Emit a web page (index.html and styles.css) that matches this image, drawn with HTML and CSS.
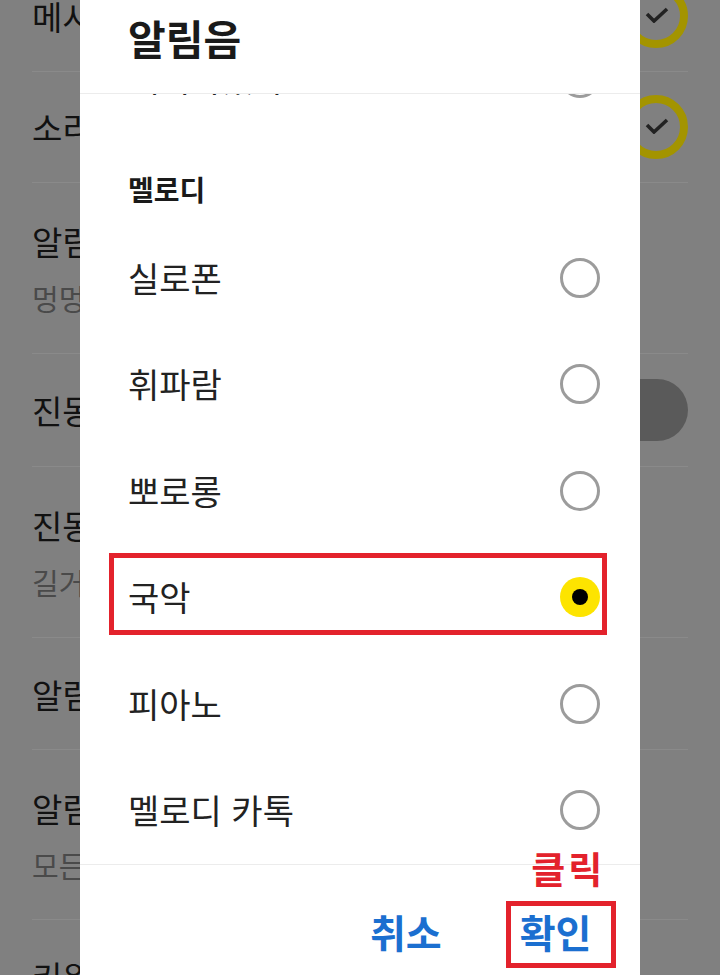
FILE: index.html
```html
<!DOCTYPE html>
<html lang="ko">
<head>
<meta charset="utf-8">
<title>알림음</title>
<link rel="stylesheet" href="styles.css">
</head>
<body>
<div class="settings">
  <div class="srow h112">
    <div class="stext"><div class="stitle">메시지 알림</div></div>
    <span class="check"><svg viewBox="0 0 24 16" width="24" height="16"><polyline points="2,7 9,14 22,2" fill="none" stroke="#222" stroke-width="3.6"/></svg></span>
  </div>
  <div class="srow h111">
    <div class="stext"><div class="stitle">소리</div></div>
    <span class="check"><svg viewBox="0 0 24 16" width="24" height="16"><polyline points="2,7 9,14 22,2" fill="none" stroke="#222" stroke-width="3.6"/></svg></span>
  </div>
  <div class="srow h171">
    <div class="stext"><div class="stitle">알림음</div><div class="ssub">멍멍</div></div>
  </div>
  <div class="srow h113">
    <div class="stext"><div class="stitle">진동</div></div>
    <span class="toggle"></span>
  </div>
  <div class="srow h171">
    <div class="stext"><div class="stitle">진동 패턴</div><div class="ssub">길거</div></div>
  </div>
  <div class="srow h112">
    <div class="stext"><div class="stitle">알림 미리보기</div></div>
  </div>
  <div class="srow h170">
    <div class="stext"><div class="stitle">알림 표시</div><div class="ssub">모든 알림</div></div>
  </div>
  <div class="srow h112">
    <div class="stext"><div class="stitle">키워드 알림</div></div>
  </div>
</div>

<div class="dialog">
  <div class="dlg-head"><h1 class="dlg-title">알림음</h1></div>
  <div class="dlg-body">
    <div class="dlg-list">
      <div class="opt"><span class="opt-label">재미가났다</span><span class="radio"></span></div>
      <div class="group">멜로디</div>
      <div class="opt"><span class="opt-label">실로폰</span><span class="radio"></span></div>
      <div class="opt"><span class="opt-label">휘파람</span><span class="radio"></span></div>
      <div class="opt"><span class="opt-label">뽀로롱</span><span class="radio"></span></div>
      <div class="opt opt-marked"><span class="opt-label">국악</span><span class="radio radio-on"></span></div>
      <div class="opt"><span class="opt-label">피아노</span><span class="radio"></span></div>
      <div class="opt"><span class="opt-label">멜로디 카톡</span><span class="radio"></span></div>
    </div>
  </div>
  <div class="dlg-foot">
    <button class="btn">취소</button>
    <button class="btn btn-ok">확인<span class="click-note">클릭</span></button>
  </div>
</div>
</body>
</html>
```

FILE: styles.css
```css
* { box-sizing: border-box; }

html, body {
  margin: 0;
  padding: 0;
  width: 720px;
  height: 975px;
  overflow: hidden;
}

body {
  position: relative;
  background: #808080;
  font-family: "Noto Sans CJK KR", "Noto Sans", sans-serif;
  color: #111;
}

/* ---------- dimmed settings list behind the dialog ---------- */
.settings {
  margin-top: -40px;
}

.srow {
  margin: 0 32px;
  border-bottom: 1px solid #8a8a8a;
  display: flex;
  align-items: center;
  justify-content: space-between;
}

.h111 { height: 111px; }
.h112 { height: 112px; }
.h113 { height: 113px; }
.h170 { height: 170px; }
.h171 { height: 171px; }

.stext {
  display: flex;
  flex-direction: column;
}

.stitle {
  font-size: 33px;
  line-height: 46px;
  color: #111;
  white-space: nowrap;
}

.ssub {
  font-size: 29px;
  line-height: 40px;
  margin-top: 14px;
  color: #4a4a4a;
  white-space: nowrap;
}

.check {
  width: 64px;
  height: 64px;
  border-radius: 50%;
  border: 8px solid #a39400;
  display: flex;
  align-items: center;
  justify-content: center;
}

.check svg {
  margin-left: 2px;
  margin-top: -2px;
}

.toggle {
  width: 100px;
  height: 62px;
  border-radius: 31px;
  background: #5a5a5a;
}

/* ---------- dialog ---------- */
.dialog {
  position: absolute;
  left: 80px;
  top: 0;
  width: 560px;
  height: 975px;
  background: #fff;
  display: flex;
  flex-direction: column;
}

.dlg-head {
  height: 94px;
  border-bottom: 1px solid #ececec;
  padding: 13px 48px 0;
}

.dlg-title {
  margin: 0;
  font-size: 41px;
  line-height: 48px;
  font-weight: 700;
  color: #1a1a1a;
}

.dlg-body {
  height: 770px;
  overflow: hidden;
}

.dlg-list {
  margin-top: -69px;
}

.opt {
  position: relative;
  height: 106.5px;
  padding: 0 40px 0 48px;
  display: flex;
  align-items: center;
  justify-content: space-between;
}

.opt-label {
  font-size: 34px;
  line-height: 44px;
  color: #222;
}

.group {
  height: 93px;
  padding: 0 48px 19px;
  display: flex;
  align-items: flex-end;
  font-size: 28px;
  line-height: 34px;
  font-weight: 700;
  color: #1a1a1a;
}

.radio {
  width: 40px;
  height: 40px;
  border-radius: 50%;
  border: 3px solid #9c9c9c;
  display: flex;
  align-items: center;
  justify-content: center;
}

.radio-on {
  border: 0;
  background: #fde400;
}

.radio-on::before {
  content: "";
  width: 16px;
  height: 16px;
  border-radius: 50%;
  background: #000;
}

/* annotation box around the selected row */
.opt-marked::after {
  content: "";
  position: absolute;
  left: 29px;
  right: 33px;
  top: 9px;
  bottom: 15.5px;
  border: 5px solid #e3222c;
}

.dlg-foot {
  flex: 1;
  border-top: 1px solid #ececec;
  display: flex;
  justify-content: flex-end;
  align-items: flex-start;
  gap: 78px;
  padding: 41px 48.5px 0 0;
}

.btn {
  position: relative;
  margin: 0;
  padding: 0;
  border: 0;
  background: none;
  font-family: inherit;
  font-size: 39px;
  line-height: 50px;
  font-weight: 700;
  color: #1b6fd0;
}

.btn-ok::after {
  content: "";
  position: absolute;
  left: -13.5px;
  right: -24.5px;
  top: -5px;
  bottom: -12px;
  border: 5px solid #e3222c;
}

.click-note {
  position: absolute;
  left: 11.5px;
  top: -59px;
  font-size: 37px;
  line-height: 42px;
  letter-spacing: 3px;
  font-weight: 700;
  color: #e3222c;
  white-space: nowrap;
}
```
